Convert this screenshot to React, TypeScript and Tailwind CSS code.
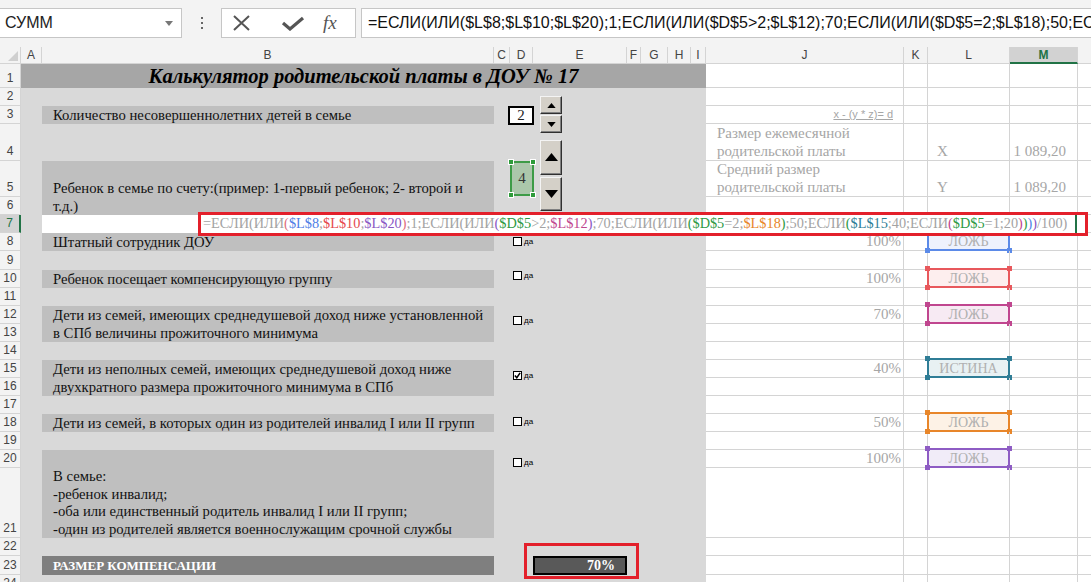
import React from "react";

const SERIF = "font-['Liberation_Serif',serif]";
const SANS = "font-['Liberation_Sans',sans-serif]";
const LINE = "border-[#d4d4d4]";

// sheet row heights, rows 1..24
const ROWS = [24, 18, 18, 37, 36, 18, 18, 18, 19, 18, 18, 18, 18, 18, 18, 18, 18, 18, 18, 18, 70, 18, 19, 18];

const HC: Record<number, string> = {
  18: "h-[18px]",
  19: "h-[19px]",
  24: "h-[24px]",
  36: "h-[36px]",
  37: "h-[37px]",
  70: "h-[70px]",
};

const COLS: [string, string][] = [
  ["A", "w-[21px]"],
  ["B", "w-[452px]"],
  ["C", "w-[16px]"],
  ["D", "w-[23px]"],
  ["E", "w-[94px]"],
  ["F", "w-[14px]"],
  ["G", "w-[27px]"],
  ["H", "w-[23px]"],
  ["I", "w-[15px]"],
  ["J", "w-[198px]"],
  ["K", "w-[24px]"],
  ["L", "w-[82px]"],
  ["M", "w-[68px]"],
];

const BASE = "#a3a3a3";
const FORMULA: [string, string][] = [
  ["=ЕСЛИ(ИЛИ", BASE],
  ["(", "#e0707e"],
  ["$L$8", "#4f7fe6"],
  [";", BASE],
  ["$L$10", "#e5494f"],
  [";", BASE],
  ["$L$20", "#8a57c4"],
  [")", "#e0707e"],
  [";1;ЕСЛИ(ИЛИ", BASE],
  ["(", "#8a57c4"],
  ["$D$5", "#2e9a44"],
  [">2;", BASE],
  ["$L$12", "#c0468f"],
  [")", "#8a57c4"],
  [";70;ЕСЛИ(ИЛИ", BASE],
  ["(", "#2e9a44"],
  ["$D$5", "#2e9a44"],
  ["=2;", BASE],
  ["$L$18", "#e8862a"],
  [")", "#2e9a44"],
  [";50;ЕСЛИ", BASE],
  ["(", "#2e9a44"],
  ["$L$15", "#2f7d96"],
  [";40;ЕСЛИ", BASE],
  ["(", "#c0468f"],
  ["$D$5", "#2e9a44"],
  ["=1;20", BASE],
  [")", "#c0468f"],
  [")", "#2e9a44"],
  [")", "#4f7fe6"],
  [")", "#8a57c4"],
  ["/100)", BASE],
];

const BOXES: Record<number, { text: string; border: string; bg: string; handle: string }> = {
  8: { text: "ЛОЖЬ", border: "border-[#5b8ae8]", bg: "bg-[#eef2fd]", handle: "bg-[#5b8ae8]" },
  10: { text: "ЛОЖЬ", border: "border-[#e8585c]", bg: "bg-[#fdeeee]", handle: "bg-[#e8585c]" },
  12: { text: "ЛОЖЬ", border: "border-[#c0468f]", bg: "bg-[#f7eaf3]", handle: "bg-[#c0468f]" },
  15: { text: "ИСТИНА", border: "border-[#2f7d96]", bg: "bg-[#e8f1f3]", handle: "bg-[#2f7d96]" },
  18: { text: "ЛОЖЬ", border: "border-[#e8862a]", bg: "bg-[#fdf2e6]", handle: "bg-[#e8862a]" },
  20: { text: "ЛОЖЬ", border: "border-[#8e5cc4]", bg: "bg-[#f1ecf8]", handle: "bg-[#8e5cc4]" },
};

const PERCENT: Record<number, string> = { 8: "100%", 10: "100%", 12: "70%", 15: "40%", 18: "50%", 20: "100%" };

function FormulaBar() {
  return (
    <div className={`h-[47px] bg-[#f3f3f3] flex items-start pt-[8px] ${SANS}`}>
      <div className="w-[182px] h-[30px] bg-white border border-l-0 border-[#c6c6c6] flex items-center pl-[5px] pr-[8px]">
        <span className="flex-1 text-[16px] text-[#222]">СУММ</span>
        <svg viewBox="0 0 8 5" className="w-[8px] h-[5px]">
          <path d="M0 0H8L4 5Z" fill="#777" />
        </svg>
      </div>
      <div className="w-[39px] h-[30px] flex flex-col items-center justify-center gap-[3px]">
        <span className="w-[2px] h-[2px] bg-[#666]" />
        <span className="w-[2px] h-[2px] bg-[#666]" />
        <span className="w-[2px] h-[2px] bg-[#666]" />
      </div>
      <div className="w-[135px] h-[30px] bg-white border border-[#c6c6c6] flex items-center">
        <svg viewBox="0 0 17 16" className="ml-[11px] w-[17px] h-[16px]">
          <path d="M1 1L16 15M16 1L1 15" stroke="#555" strokeWidth="2" fill="none" />
        </svg>
        <svg viewBox="0 0 26 15" className="ml-[30px] w-[26px] h-[15px]">
          <path d="M3 7L10 13L23 2" stroke="#555" strokeWidth="3.2" fill="none" />
        </svg>
        <span className={`ml-[17px] text-[19px] italic text-[#555] ${SERIF}`}>fx</span>
      </div>
      <div className="ml-[5px] flex-1 h-[30px] bg-white border border-r-0 border-[#c6c6c6] flex items-center pl-[6px] overflow-hidden whitespace-nowrap text-[16px] text-[#111]">
        =ЕСЛИ(ИЛИ($L$8;$L$10;$L$20);1;ЕСЛИ(ИЛИ($D$5&gt;2;$L$12);70;ЕСЛИ(ИЛИ($D$5=2;$L$18);50;ЕСЛИ($L$15;40;ЕСЛИ($D$5=1;20))))/100)
      </div>
    </div>
  );
}

function ColumnHeaders() {
  return (
    <div className={`h-[17px] flex bg-[#f3f3f3] text-[12px] text-[#444] ${SANS}`}>
      <div className={`w-[21px] shrink-0 border-r border-b ${LINE} flex items-end justify-end p-[2px]`}>
        <svg viewBox="0 0 10 10" className="w-[10px] h-[10px]">
          <path d="M10 0V10H0Z" fill="#cfcfcf" />
        </svg>
      </div>
      {COLS.map(([c, w]) =>
        c === "M" ? (
          <div
            key={c}
            className={`${w} shrink-0 bg-[#d2d2d2] border-r ${LINE} border-b-2 border-b-[#217346] flex items-center justify-center text-[#217346] font-bold`}
          >
            {c}
          </div>
        ) : (
          <div key={c} className={`${w} shrink-0 border-r border-b ${LINE} flex items-center justify-center`}>
            {c}
          </div>
        )
      )}
      <div className={`flex-1 border-b ${LINE}`} />
    </div>
  );
}

function RowHeaders() {
  return (
    <div className={`w-[21px] shrink-0 flex flex-col text-[12px] text-[#444] ${SANS}`}>
      {ROWS.map((h, i) =>
        i + 1 === 7 ? (
          <div
            key={i}
            className={`${HC[h]} shrink-0 bg-[#d2d2d2] border-b ${LINE} border-r-2 border-r-[#217346] flex items-end justify-center leading-[17px] text-[#217346]`}
          >
            {i + 1}
          </div>
        ) : (
          <div key={i} className={`${HC[h]} shrink-0 bg-[#f3f3f3] border-b border-r ${LINE} flex items-end justify-center leading-[17px]`}>
            {i + 1}
          </div>
        )
      )}
    </div>
  );
}

function Check({ checked }: { checked?: boolean }) {
  return (
    <div className="flex items-center">
      <div className="w-[9px] h-[9px] border-[1.5px] border-black bg-white flex items-center justify-center">
        {checked && (
          <svg viewBox="0 0 8 8" className="w-[7px] h-[7px]">
            <path d="M1 4L3.2 6.5L7 1" stroke="black" strokeWidth="1.8" fill="none" />
          </svg>
        )}
      </div>
      <span className={`ml-[2px] text-[8px] leading-none text-black ${SANS}`}>да</span>
    </div>
  );
}

function LabelRow({
  h,
  lines,
  check,
  lead = "leading-[18px]",
}: {
  h: string;
  lines: string[];
  check?: { pt: string; on?: boolean };
  lead?: string;
}) {
  return (
    <div className={`flex shrink-0 ${h}`}>
      <div className="w-[21px] shrink-0" />
      <div className={`w-[452px] shrink-0 bg-[#bfbfbf] flex flex-col justify-end pl-[11px] text-[14.7px] text-[#111] ${SERIF} ${lead}`}>
        {lines.map((l) => (
          <div key={l} className="whitespace-nowrap">
            {l}
          </div>
        ))}
      </div>
      {check && (
        <div className={`pl-[19px] ${check.pt}`}>
          <Check checked={check.on} />
        </div>
      )}
    </div>
  );
}

function LeftPanel() {
  return (
    <div className="w-[685px] shrink-0 bg-[#d9d9d9] flex flex-col">
      <div className={`h-[24px] shrink-0 bg-[#a6a6a6] flex items-center justify-center text-[20.5px] font-bold italic text-black ${SERIF}`}>
        Калькулятор родительской платы в ДОУ № 17
      </div>
      <div className="h-[18px] shrink-0" />
      <LabelRow h="h-[18px]" lines={["Количество несовершеннолетних детей в семье"]} />
      <div className="h-[37px] shrink-0" />
      <LabelRow h="h-[54px]" lines={["Ребенок в семье по счету:(пример: 1-первый ребенок; 2- второй и", "т.д.)"]} />
      <div className="h-[18px] shrink-0 flex">
        <div className="w-[21px] shrink-0" />
        <div className="w-[452px] shrink-0 bg-white" />
      </div>
      <LabelRow h="h-[18px]" lines={["Штатный сотрудник ДОУ"]} check={{ pt: "pt-[4px]" }} />
      <div className="h-[19px] shrink-0" />
      <LabelRow h="h-[18px]" lines={["Ребенок посещает компенсирующую группу"]} check={{ pt: "pt-[1px]" }} />
      <div className="h-[18px] shrink-0" />
      <LabelRow
        h="h-[36px]"
        lines={["Дети из семей, имеющих среднедушевой доход ниже установленной", "в СПб величины прожиточного минимума"]}
        check={{ pt: "pt-[10px]" }}
      />
      <div className="h-[18px] shrink-0" />
      <LabelRow
        h="h-[36px]"
        lines={["Дети из неполных семей, имеющих среднедушевой доход ниже", "двухкратного размера прожиточного минимума в СПб"]}
        check={{ pt: "pt-[11px]", on: true }}
      />
      <div className="h-[18px] shrink-0" />
      <LabelRow
        h="h-[18px]"
        lines={["Дети из семей, в которых один из родителей инвалид I или II групп"]}
        check={{ pt: "pt-[3px]" }}
      />
      <div className="h-[18px] shrink-0" />
      <LabelRow
        h="h-[88px]"
        lead="leading-[17.5px]"
        lines={[
          "В семье:",
          "-ребенок инвалид;",
          "-оба или единственный родитель инвалид I или II групп;",
          "-один из родителей является военнослужащим срочной службы",
        ]}
        check={{ pt: "pt-[8px]" }}
      />
      <div className="h-[18px] shrink-0" />
      <div className="h-[19px] shrink-0 flex">
        <div className="w-[21px] shrink-0" />
        <div className={`w-[452px] shrink-0 bg-[#7f7f7f] flex items-center pl-[11px] text-[13px] font-bold text-white ${SERIF}`}>
          РАЗМЕР КОМПЕНСАЦИИ
        </div>
        <div
          className={`ml-[39px] w-[94px] border-2 border-black bg-[#595959] flex items-center justify-end pr-[10px] text-[14px] font-bold text-white ${SERIF}`}
        >
          70%
        </div>
      </div>
      <div className="h-[18px] shrink-0" />
    </div>
  );
}

function RightRow({ r }: { r: number }) {
  const h = HC[ROWS[r - 1]];
  const box = BOXES[r];
  let j: React.ReactNode = null;
  if (r === 3)
    j = (
      <div className={`h-full flex items-center justify-end pr-[10px] text-[11px] underline text-[#a6a6a6] ${SANS}`}>
        x - (y * z)= d
      </div>
    );
  if (r === 4 || r === 5)
    j = (
      <div className="h-full flex flex-col justify-end pl-[11px] leading-[18px]">
        <div>{r === 4 ? "Размер ежемесячной" : "Средний размер"}</div>
        <div>родительской платы</div>
      </div>
    );
  if (PERCENT[r]) j = <div className="h-full flex items-end justify-end pr-[2px] leading-[18px]">{PERCENT[r]}</div>;

  return (
    <div className={`flex shrink-0 ${h} text-[15px] text-[#a6a6a6] ${SERIF}`}>
      <div className={`w-[198px] shrink-0 border-r border-b ${LINE}`}>{j}</div>
      <div className={`w-[24px] shrink-0 border-r border-b ${LINE}`} />
      <div className={`w-[82px] shrink-0 relative border-r border-b ${LINE}`}>
        {(r === 4 || r === 5) && (
          <div className="h-full flex items-end pl-[9px] leading-[18px]">{r === 4 ? "X" : "Y"}</div>
        )}
        {box && (
          <div
            className={`absolute -left-[1px] -right-[1px] -top-[2px] -bottom-[1px] border-2 ${box.border} ${box.bg} flex items-center justify-center text-[14px] text-[#b0b0b0]`}
          >
            {box.text}
            <span className={`absolute -left-[4px] -top-[4px] w-[5px] h-[5px] ${box.handle}`} />
            <span className={`absolute -right-[4px] -top-[4px] w-[5px] h-[5px] ${box.handle}`} />
            <span className={`absolute -left-[4px] -bottom-[4px] w-[5px] h-[5px] ${box.handle}`} />
            <span className={`absolute -right-[4px] -bottom-[4px] w-[5px] h-[5px] ${box.handle}`} />
          </div>
        )}
      </div>
      <div className={`w-[68px] shrink-0 border-r border-b ${LINE}`}>
        {(r === 4 || r === 5) && <div className="h-full flex items-end justify-end pr-[11px] leading-[18px]">1 089,20</div>}
      </div>
      <div className={`flex-1 border-b ${LINE}`} />
    </div>
  );
}

function RightPanel() {
  return (
    <div className="flex-1 flex flex-col bg-white">
      {ROWS.map((_, i) => (
        <RightRow key={i} r={i + 1} />
      ))}
    </div>
  );
}

function SpinBtn({ up, big }: { up?: boolean; big?: boolean }) {
  return (
    <div className="flex-1 bg-[#d4d0c8] border border-t-[#f4f4f4] border-l-[#f4f4f4] border-r-[#303030] border-b-[#303030] shadow-[inset_-1px_-1px_0_#808080] flex items-center justify-center">
      <svg viewBox="0 0 10 6" className={big ? "w-[13px] h-[8px]" : "w-[9px] h-[5px]"}>
        <path d={up ? "M0 6L5 0L10 6Z" : "M0 0H10L5 6Z"} fill="black" />
      </svg>
    </div>
  );
}

function Handle({ pos }: { pos: string }) {
  return <span className={`absolute w-[6px] h-[6px] bg-[#2e9b3a] border border-white ${pos}`} />;
}

export default function App() {
  return (
    <div className="relative w-[1091px] h-[582px] overflow-hidden bg-white">
      <FormulaBar />
      <ColumnHeaders />
      <div className="flex">
        <RowHeaders />
        <LeftPanel />
        <RightPanel />
      </div>

      {/* floating form controls */}
      <div className={`absolute left-[508px] top-[106px] w-[26px] h-[19px] border-2 border-black bg-white flex items-center justify-center text-[15px] text-[#222] ${SERIF}`}>
        2
      </div>
      <div className="absolute left-[540px] top-[96px] w-[22px] h-[37px] flex flex-col gap-[1px]">
        <SpinBtn up />
        <SpinBtn />
      </div>
      <div className={`absolute left-[510px] top-[161px] w-[24px] h-[35px] border-2 border-[#3d9b47] bg-[#abc7ab] flex items-center justify-center text-[15px] text-[#333] ${SERIF}`}>
        4
        <Handle pos="-left-[4px] -top-[4px]" />
        <Handle pos="-right-[4px] -top-[4px]" />
        <Handle pos="-left-[4px] -bottom-[4px]" />
        <Handle pos="-right-[4px] -bottom-[4px]" />
      </div>
      <div className="absolute left-[540px] top-[140px] w-[22px] h-[71px] flex flex-col gap-[2px]">
        <SpinBtn up big />
        <SpinBtn big />
      </div>

      {/* in-cell formula editor, outlined in red */}
      <div className="absolute left-[198px] top-[212px] w-[890px] h-[24px] border-[3px] border-[#e3202b] bg-white">
        <div className={`h-full flex items-center pl-[2px] whitespace-nowrap overflow-hidden text-[14.3px] ${SERIF}`}>
          {FORMULA.map(([t, c], i) => (
            <span key={i} style={{ color: c }}>
              {t}
            </span>
          ))}
        </div>
        <span className="absolute left-[874px] top-0 w-[2px] h-full bg-[#217346]" />
      </div>

      {/* red outline round the result */}
      <div className="absolute left-[524px] top-[543px] w-[115px] h-[36px] border-[3px] border-[#e3202b]" />
    </div>
  );
}
